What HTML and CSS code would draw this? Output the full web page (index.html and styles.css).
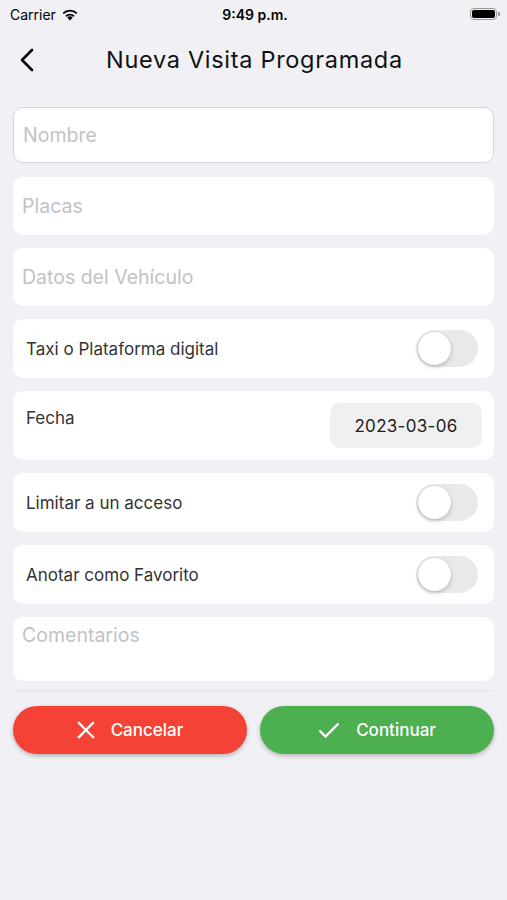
FILE: index.html
```html
<!DOCTYPE html>
<html lang="es">
<head>
    <meta charset="UTF-8">
    <meta name="viewport" content="width=device-width, initial-scale=1">
    <title>Nueva Visita Programada</title>
    <link rel="stylesheet" href="styles.css">
</head>
<body>
<div class="screen">
    <div class="status">
        <div class="status-left">
            <span>Carrier</span>
            <svg class="wifi" width="18" height="13" viewBox="0 0 18 13">
                <path d="M9 12.5 L6.3 9.6 A3.9 3.9 0 0 1 11.7 9.6 Z" fill="#000"/>
                <path d="M4.4 7.6 A6.6 6.6 0 0 1 13.6 7.6 L12.4 8.9 A4.9 4.9 0 0 0 5.6 8.9 Z" fill="#000"/>
                <path d="M1.6 4.7 A10.6 10.6 0 0 1 16.4 4.7 L15.2 6 A8.8 8.8 0 0 0 2.8 6 Z" fill="#000"/>
            </svg>
        </div>
        <div class="status-time">9:49 p.m.</div>
        <div class="status-right">
            <div class="battery"><div class="battery-level"></div></div>
            <div class="battery-tip"></div>
        </div>
    </div>

    <div class="navbar">
        <svg class="back" width="14" height="24" viewBox="0 0 14 24">
            <path d="M12 2 L2 12 L12 22" fill="none" stroke="#000" stroke-width="2.6" stroke-linecap="round" stroke-linejoin="round"/>
        </svg>
        <div class="title">Nueva Visita Programada</div>
    </div>

    <div class="form">
        <div class="card field outlined"><span class="placeholder">Nombre</span></div>
        <div class="card field"><span class="placeholder">Placas</span></div>
        <div class="card field"><span class="placeholder">Datos del Vehículo</span></div>
        <div class="card row">
            <span class="label">Taxi o Plataforma digital</span>
            <div class="toggle"><div class="knob"></div></div>
        </div>
        <div class="card row date-row">
            <span class="label">Fecha</span>
            <div class="date">2023-03-06</div>
        </div>
        <div class="card row">
            <span class="label">Limitar a un acceso</span>
            <div class="toggle"><div class="knob"></div></div>
        </div>
        <div class="card row">
            <span class="label">Anotar como Favorito</span>
            <div class="toggle"><div class="knob"></div></div>
        </div>
        <div class="card comments"><span class="placeholder">Comentarios</span></div>
    </div>

    <div class="divider"></div>

    <div class="actions">
        <div class="btn cancel">
            <svg width="18" height="18" viewBox="0 0 18 18">
                <path d="M2 2 L16 16 M16 2 L2 16" stroke="#fff" stroke-width="2.4" stroke-linecap="square"/>
            </svg>
            <span>Cancelar</span>
        </div>
        <div class="btn confirm">
            <svg width="22" height="18" viewBox="0 0 22 18">
                <path d="M1.5 9.5 L7.5 15.5 L20.5 2.5" fill="none" stroke="#fff" stroke-width="2.4"/>
            </svg>
            <span>Continuar</span>
        </div>
    </div>
</div>
</body>
</html>
```

FILE: styles.css
```css
* {
    box-sizing: border-box;
}

html, body {
    margin: 0;
    padding: 0;
}

body {
    background: #f0f0f5;
    font-family: Inter, "Noto Sans", "Liberation Sans", sans-serif;
    color: #222;
}

.screen {
    width: 507px;
    height: 900px;
    display: flex;
    flex-direction: column;
}

.status {
    height: 28px;
    display: flex;
    align-items: center;
    justify-content: space-between;
    padding: 0 7px 0 10px;
    font-size: 14px;
    color: #000;
}

.status-left {
    display: flex;
    align-items: center;
    gap: 5px;
    width: 120px;
}

.status-time {
    font-weight: 600;
    font-size: 14px;
}

.status-right {
    width: 120px;
    display: flex;
    justify-content: flex-end;
    align-items: center;
}

.battery {
    width: 27px;
    height: 12px;
    border: 1px solid #9a9a9a;
    border-radius: 4px;
    padding: 1px;
}

.battery-level {
    width: 100%;
    height: 100%;
    background: #000;
    border-radius: 2px;
}

.battery-tip {
    width: 2px;
    height: 4px;
    background: #9a9a9a;
    border-radius: 0 1px 1px 0;
    margin-left: 1px;
}

.navbar {
    height: 63px;
    display: flex;
    align-items: center;
    padding-left: 20px;
}

.back {
    flex-shrink: 0;
}

.title {
    margin-left: 72px;
    font-size: 23.5px;
    font-weight: 400;
    color: #111;
    letter-spacing: 0.7px;
}

.form {
    display: flex;
    flex-direction: column;
    gap: 13px;
    padding: 16px 13px 0;
}

.card {
    background: #fff;
    border-radius: 10px;
}

.field {
    height: 58px;
    display: flex;
    align-items: center;
    padding-left: 9px;
}

.outlined {
    height: 56px;
    margin-bottom: 1px;
    border: 1px solid #d6d6da;
}

.placeholder {
    font-size: 19.5px;
    color: #c2c2c6;
}

.row {
    height: 59px;
    display: flex;
    align-items: center;
    justify-content: space-between;
    padding: 0 16px 0 13px;
}

.label {
    font-size: 17px;
    color: #333;
}

.toggle {
    width: 62px;
    height: 37px;
    background: #e9e9eb;
    border-radius: 19px;
    padding: 2px;
}

.knob {
    width: 33px;
    height: 33px;
    background: #fff;
    border-radius: 50%;
    box-shadow: 0 2px 4px rgba(0, 0, 0, 0.2), 0 0 1px rgba(0, 0, 0, 0.15);
}

.date-row {
    height: 69px;
    align-items: flex-start;
    padding: 12px 12px 0 13px;
}

.date-row .label {
    margin-top: 5px;
}

.date {
    width: 152px;
    height: 45px;
    background: #f0f0f2;
    border-radius: 10px;
    display: flex;
    align-items: center;
    justify-content: center;
    font-size: 17px;
    color: #222;
    letter-spacing: 0.3px;
}

.comments {
    height: 64px;
    padding: 6px 9px;
}

.divider {
    margin: 9px 13px 0;
    height: 1px;
    background: #e4e4e8;
}

.actions {
    display: flex;
    gap: 13px;
    padding: 15px 13px 0;
}

.btn {
    flex: 1;
    height: 48px;
    border-radius: 24px;
    display: flex;
    align-items: center;
    justify-content: center;
    gap: 16px;
    color: #fff;
    font-size: 17px;
    font-weight: 500;
    box-shadow: 0 2px 4px rgba(0, 0, 0, 0.25);
}

.cancel {
    background: #f44336;
}

.confirm {
    background: #4caf50;
}
```
